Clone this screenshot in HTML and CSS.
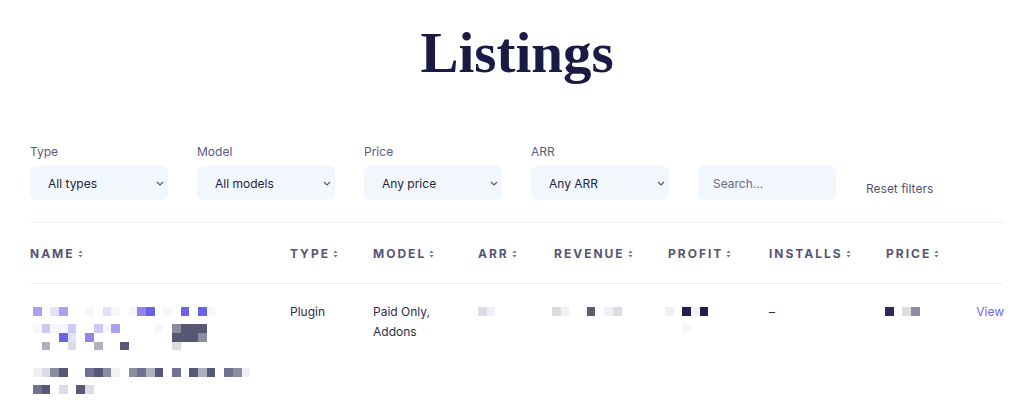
FILE: index.html
```html
<!DOCTYPE html>
<html lang="en">
<head>
    <meta charset="UTF-8">
    <meta name="viewport" content="width=device-width, initial-scale=1.0">
    <title>Listings</title>
    <link rel="stylesheet" href="styles.css">
</head>
<body>
    <main class="page">
        <h1 class="title">Listings</h1>

        <div class="filters">
            <div class="filter">
                <label class="filter-label">Type</label>
                <div class="select">
                    <span>All types</span>
                    <svg class="chevron" width="8" height="5" viewBox="0 0 8 5"><polyline points="1,1 4,4 7,1" /></svg>
                </div>
            </div>
            <div class="filter">
                <label class="filter-label">Model</label>
                <div class="select">
                    <span>All models</span>
                    <svg class="chevron" width="8" height="5" viewBox="0 0 8 5"><polyline points="1,1 4,4 7,1" /></svg>
                </div>
            </div>
            <div class="filter">
                <label class="filter-label">Price</label>
                <div class="select">
                    <span>Any price</span>
                    <svg class="chevron" width="8" height="5" viewBox="0 0 8 5"><polyline points="1,1 4,4 7,1" /></svg>
                </div>
            </div>
            <div class="filter">
                <label class="filter-label">ARR</label>
                <div class="select">
                    <span>Any ARR</span>
                    <svg class="chevron" width="8" height="5" viewBox="0 0 8 5"><polyline points="1,1 4,4 7,1" /></svg>
                </div>
            </div>
            <div class="filter">
                <input class="search" type="text" placeholder="Search...">
            </div>
            <button class="reset">Reset filters</button>
        </div>

        <div class="listing-table">
            <div class="row head">
                <div class="th">NAME<svg class="sort" width="5" height="8" viewBox="0 0 5 8"><path d="M2.5 0.5 L4.6 3 L0.4 3 Z M0.4 5 L4.6 5 L2.5 7.5 Z" /></svg></div>
                <div class="th">TYPE<svg class="sort" width="5" height="8" viewBox="0 0 5 8"><path d="M2.5 0.5 L4.6 3 L0.4 3 Z M0.4 5 L4.6 5 L2.5 7.5 Z" /></svg></div>
                <div class="th">MODEL<svg class="sort" width="5" height="8" viewBox="0 0 5 8"><path d="M2.5 0.5 L4.6 3 L0.4 3 Z M0.4 5 L4.6 5 L2.5 7.5 Z" /></svg></div>
                <div class="th">ARR<svg class="sort" width="5" height="8" viewBox="0 0 5 8"><path d="M2.5 0.5 L4.6 3 L0.4 3 Z M0.4 5 L4.6 5 L2.5 7.5 Z" /></svg></div>
                <div class="th">REVENUE<svg class="sort" width="5" height="8" viewBox="0 0 5 8"><path d="M2.5 0.5 L4.6 3 L0.4 3 Z M0.4 5 L4.6 5 L2.5 7.5 Z" /></svg></div>
                <div class="th">PROFIT<svg class="sort" width="5" height="8" viewBox="0 0 5 8"><path d="M2.5 0.5 L4.6 3 L0.4 3 Z M0.4 5 L4.6 5 L2.5 7.5 Z" /></svg></div>
                <div class="th">INSTALLS<svg class="sort" width="5" height="8" viewBox="0 0 5 8"><path d="M2.5 0.5 L4.6 3 L0.4 3 Z M0.4 5 L4.6 5 L2.5 7.5 Z" /></svg></div>
                <div class="th">PRICE<svg class="sort" width="5" height="8" viewBox="0 0 5 8"><path d="M2.5 0.5 L4.6 3 L0.4 3 Z M0.4 5 L4.6 5 L2.5 7.5 Z" /></svg></div>
                <div class="th"></div>
            </div>

            <div class="row item">
                <div class="td">
                    <!-- pixelated (hidden) name -->
                    <div class="mosaic name-mosaic" data-rows="d.bd..a.ba.aef.a.f.fa....|.........................|acaac..cad....a.jkkk.....|...fb.e.........kkkj.....|.i..h..i..k.....h........|.........................|.........................|ghjk..mkjg.jmik.m.kik.mjg|.........................|mk.h.kh.................."></div>
                </div>
                <div class="td">Plugin</div>
                <div class="td">Paid Only,<br>Addons</div>
                <div class="td"><div class="mosaic" data-rows="hg"></div></div>
                <div class="td"><div class="mosaic shift-2" data-rows="hg..n.gh"></div></div>
                <div class="td"><div class="mosaic shift-3" data-rows="g.lgl|.....|..a.."></div></div>
                <div class="td">–</div>
                <div class="td"><div class="mosaic shift-1" data-rows="o.hj"></div></div>
                <div class="td"><a class="view" href="#">View</a></div>
            </div>
        </div>
    </main>

    <script src="script.js"></script>
</body>
</html>
```

FILE: styles.css
```css
body, html {
    margin: 0;
    background-color: #fff;
    font-family: Inter, "Noto Sans", sans-serif;
    font-size: 12px;
    color: #2e2e48;
}
.page {
    padding: 0 20px 0 30px;
}
.title {
    margin: 24px 0 0;
    font-family: "Liberation Serif", "DejaVu Serif", serif;
    font-size: 57px;
    line-height: 57px;
    font-weight: 700;
    text-align: center;
    color: #1b1a45;
}

/* filtreler */
.filters {
    display: flex;
    align-items: flex-end;
    gap: 29px;
    padding: 63px 0 22px;
    border-bottom: 1px solid #eef2f9;
}
.filter {
    display: flex;
    flex-direction: column;
    gap: 6px;
    width: 138px;
}
.filter-label {
    line-height: 16px;
    color: #5b5b7a;
}
.select {
    display: flex;
    align-items: center;
    justify-content: space-between;
    height: 34px;
    padding: 0 4px 0 18px;
    box-sizing: border-box;
    background-color: #f2f6fd;
    border-radius: 6px;
    color: #24243f;
}
.chevron {
    fill: none;
    stroke: #55556a;
    stroke-width: 1.1;
}
.search {
    height: 34px;
    width: 100%;
    padding: 0 15px;
    box-sizing: border-box;
    border: none;
    border-radius: 6px;
    background-color: #f2f6fd;
    font-family: inherit;
    font-size: 12px;
    color: #24243f;
    outline: none;
}
.search::placeholder {
    color: #6a6a86;
}
.reset {
    margin: 0 0 3px 1px;
    padding: 0;
    border: none;
    background: none;
    font-family: inherit;
    font-size: 12px;
    line-height: 16px;
    color: #55557a;
    cursor: pointer;
}

/* tablo */
.row {
    display: grid;
    grid-template-columns: 260px 83px 105px 76px 114px 101px 117px 1fr auto;
}
.row.head {
    padding: 23px 0 21px;
    border-bottom: 1px solid #eef2f9;
}
.th {
    display: flex;
    align-items: center;
    gap: 3px;
    font-size: 12px;
    line-height: 16px;
    font-weight: 700;
    letter-spacing: 2px;
    color: #555575;
}
.sort {
    fill: #7a7a96;
}
.row.item {
    padding-top: 18px;
}
.td {
    line-height: 20px;
    color: #2e2e48;
}
.view {
    color: #6b63ef;
    text-decoration: none;
}

/* piksel mozaik */
.mosaic {
    margin-top: 5px;
}
.name-mosaic {
    margin-left: 3px;
}
.shift-1 { margin-left: -1px; }
.shift-2 { margin-left: -2px; }
.shift-3 { margin-left: -3px; }
.mrow {
    display: flex;
    height: 8.7px;
}
.cell {
    width: 8.7px;
    height: 8.7px;
    flex: none;
}
.c-a { background-color: #f6f6fc; }
.c-b { background-color: #e3e2f9; }
.c-c { background-color: #cdcbf4; }
.c-d { background-color: #a6a3ec; }
.c-e { background-color: #8d88ea; }
.c-f { background-color: #6a63e6; }
.c-g { background-color: #f1f1f5; }
.c-h { background-color: #dcdce4; }
.c-i { background-color: #b0b0c0; }
.c-j { background-color: #8c8ca0; }
.c-k { background-color: #575778; }
.c-l { background-color: #1f1f4a; }
.c-m { background-color: #727290; }
.c-n { background-color: #5c5c72; }
.c-o { background-color: #2a2a58; }
```

FILE: script.js
```js
// Mozaik satırlarını data-rows içinden oluştur
document.querySelectorAll('.mosaic').forEach(function (box) {
    const rows = box.dataset.rows.split('|');
    rows.forEach(function (line) {
        const row = document.createElement('div');
        row.className = 'mrow';
        for (const ch of line) {
            const cell = document.createElement('span');
            cell.className = ch === '.' ? 'cell' : 'cell c-' + ch;
            row.appendChild(cell);
        }
        box.appendChild(row);
    });
});
```
